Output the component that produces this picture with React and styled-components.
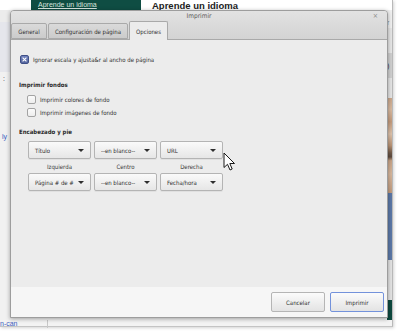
import React from "react";
import styled, { createGlobalStyle } from "styled-components";

const GlobalStyle = createGlobalStyle`
  html, body { margin: 0; padding: 0; background: #ffffff; }
  body { font-family: "Liberation Sans Narrow", "DejaVu Sans Condensed", "Roboto", sans-serif; color: #333; }
  * { box-sizing: border-box; }
`;

const FONT = `"Liberation Sans Narrow", "DejaVu Sans Condensed", "Roboto", sans-serif`;

const Screen = styled.div`
  position: relative;
  width: 400px;
  height: 331px;
  overflow: hidden;
  background: #ffffff;
`;

/* ---------- backdrop (browser page behind the dialog) ---------- */
const Browser = styled.div`
  width: 393px;
  height: 327px;
  display: flex;
  flex-direction: column;
  background: #f3f3f3;
  border-right: 1px solid #b9b9b9;
  border-bottom: 1px solid #c4c4c4;
  box-shadow: 1px 1px 3px rgba(0, 0, 0, 0.18);
`;

const TopBar = styled.div`
  height: 10px;
  display: flex;
  align-items: flex-start;
  background: #ffffff;
`;

const Banner = styled.div`
  width: 110px;
  height: 10px;
  margin-left: 31px;
  background: #0f4d43;
  color: #d6e4de;
  font-family: "Liberation Sans", sans-serif;
  font-size: 7px;
  line-height: 9px;
  padding: 0 0 0 7px;
  text-decoration: underline;
  overflow: hidden;
  white-space: nowrap;
`;

const Heading = styled.div`
  margin-left: 11px;
  color: #222;
  font-family: "Liberation Sans", sans-serif;
  font-size: 9.5px;
  line-height: 11px;
  height: 11px;
  font-weight: 700;
  white-space: nowrap;
`;

const Middle = styled.div`
  flex: 1;
  display: grid;
  grid-template-columns: 10px 1fr 5px;
`;

const Rail = styled.div`
  display: flex;
  flex-direction: column;
  overflow: hidden;
`;

const Block = styled.div`
  height: ${(p) => p.$h}px;
  flex: ${(p) => (p.$grow ? 1 : "none")};
  background: ${(p) => p.$bg || "transparent"};
  color: ${(p) => p.$color || "#333"};
  font-family: "Liberation Sans", sans-serif;
  font-size: 7px;
  line-height: ${(p) => p.$h}px;
  padding-left: ${(p) => p.$pl || 0}px;
  white-space: nowrap;
`;

const Wood = styled.div`
  height: 95px;
  background: linear-gradient(
    180deg,
    #c9a68a 0%, #d8b9a0 12%, #c29a7c 25%, #dcc1aa 38%, #b89274 50%,
    #6e5848 58%, #5d4a3e 62%, #c7a386 66%, #d6b69c 80%, #bf9a7d 100%
  );
`;

const Bottom = styled.div`
  height: 9px;
  display: flex;
  align-items: flex-end;
  color: #3a5cc0;
  font-family: "Liberation Sans", sans-serif;
  font-size: 7px;
  line-height: 8px;
`;

const BottomText = styled.span`
  width: 48px;
  border-right: 1px solid #c8c8c8;
  height: 8px;
`;

/* ---------- dialog ---------- */
const Dialog = styled.div`
  position: absolute;
  left: 10px;
  top: 10px;
  width: 378px;
  height: 308px;
  display: flex;
  flex-direction: column;
  border: 1px solid #9d9d9d;
  border-radius: 4px 4px 0 0;
  background: #ececec;
  box-shadow: 0 1px 4px rgba(0, 0, 0, 0.35);
  font-family: ${FONT};
  overflow: hidden;
`;

const Header = styled.div`
  height: 29px;
  display: flex;
  flex-direction: column;
  background: linear-gradient(180deg, #e2e2e2 0%, #d3d3d3 100%);
  border-bottom: 1px solid #a9a9a9;
`;

const TitleRow = styled.div`
  position: relative;
  height: 12px;
  display: flex;
  align-items: center;
  justify-content: center;
`;

const Title = styled.div`
  font-size: 6.5px;
  color: #5a5a5a;
`;

const Close = styled.div`
  position: absolute;
  right: 9px;
  top: 2px;
  font-size: 7px;
  line-height: 7px;
  color: #8a8a8a;
`;

const TabStrip = styled.div`
  flex: 1;
  display: flex;
  align-items: flex-end;
  gap: 1px;
`;

const Tab = styled.div`
  width: ${(p) => p.$w}px;
  height: ${(p) => (p.$active ? 19 : 16)}px;
  margin-bottom: ${(p) => (p.$active ? -1 : 0)}px;
  display: flex;
  align-items: center;
  justify-content: center;
  font-size: 6px;
  font-weight: 400;
  white-space: nowrap;
  color: #2f2f2f;
  border: 1px solid #a9a9a9;
  border-bottom: ${(p) => (p.$active ? "none" : "1px solid #a9a9a9")};
  border-radius: 2px 2px 0 0;
  background: ${(p) =>
    p.$active ? "#ececec" : "linear-gradient(180deg, #dadada 0%, #cbcbcb 100%)"};
  padding-top: ${(p) => (p.$active ? 1 : 0)}px;
`;

const Content = styled.div`
  flex: 1;
  display: flex;
  flex-direction: column;
  padding: 14px 8px 0 8px;
  background: #ececec;
`;

const CheckRow = styled.div`
  height: ${(p) => p.$h || 13}px;
  display: flex;
  align-items: center;
  gap: 4px;
  padding-left: ${(p) => p.$indent || 0}px;
  margin-top: ${(p) => p.$mt || 0}px;
  font-size: 6px;
  color: #2f2f2f;
  white-space: nowrap;
`;

const Box = styled.span`
  width: 9px;
  height: 9px;
  flex: none;
  display: inline-flex;
  border-radius: 2px;
  border: 1px solid ${(p) => (p.$checked ? "#3f4f86" : "#a3a3a3")};
  background: ${(p) =>
    p.$checked
      ? "linear-gradient(180deg, #7283bd 0%, #56679f 100%)"
      : "linear-gradient(180deg, #fbfbfb 0%, #ededed 100%)"};
  align-items: center;
  justify-content: center;
`;

const SectionTitle = styled.div`
  height: 10px;
  margin-top: ${(p) => p.$mt}px;
  display: flex;
  align-items: center;
  font-size: 6px;
  font-weight: 700;
  color: #2a2a2a;
  white-space: nowrap;
`;

const ComboGrid = styled.div`
  margin-top: 5px;
  margin-left: 9px;
  display: grid;
  grid-template-columns: repeat(3, 63px);
  grid-template-rows: 18px 14px 18px;
  column-gap: 3px;
`;

const Combo = styled.div`
  display: flex;
  align-items: center;
  justify-content: space-between;
  padding: 0 6px 0 6px;
  border: 1px solid #b4b4b4;
  border-radius: 2px;
  background: linear-gradient(180deg, #fafafa 0%, #e6e6e6 100%);
  box-shadow: 0 1px 0 rgba(0, 0, 0, 0.05);
  font-size: 6px;
  color: #2f2f2f;
  white-space: nowrap;
`;

const Arrow = styled.span`
  width: 0;
  height: 0;
  border-left: 3px solid transparent;
  border-right: 3px solid transparent;
  border-top: 3px solid #2e2e2e;
  flex: none;
`;

const ColLabel = styled.div`
  display: flex;
  align-items: center;
  justify-content: center;
  font-size: 6px;
  color: #3a3a3a;
`;

const Footer = styled.div`
  height: 30px;
  display: flex;
  align-items: center;
  justify-content: flex-end;
  gap: 5px;
  padding-right: 3px;
  background: #f6f6f6;
`;

const Button = styled.div`
  width: 54px;
  height: 20px;
  display: flex;
  align-items: center;
  justify-content: center;
  border: ${(p) => (p.$default ? "1.5px solid #7392db" : "1px solid #b5b5b5")};
  border-radius: 2px;
  background: linear-gradient(180deg, #fbfbfb 0%, #e3e3e3 100%);
  font-size: 6px;
  color: #2f2f2f;
`;

const Cursor = styled.svg`
  position: absolute;
  left: 223px;
  top: 152px;
`;

function CheckMark() {
  return (
    <svg width="5" height="5" viewBox="0 0 5 5">
      <path d="M0.6 0.6 L4.4 4.4 M4.4 0.6 L0.6 4.4" stroke="#fff" strokeWidth="1.1" />
    </svg>
  );
}

const combos = [
  ["Título", "--en blanco--", "URL"],
  ["Página # de #", "--en blanco--", "Fecha/hora"],
];

export default function App() {
  return (
    <Screen>
      <GlobalStyle />
      <Browser>
        <TopBar>
          <Banner>Aprende un idioma</Banner>
          <Heading>Aprende un idioma</Heading>
        </TopBar>
        <Middle>
          <Rail>
            <Block $h={12} $bg="#ececec" />
            <Block $h={50} $bg="#e5e6ec" />
            <Block $h={14} $bg="#f1f1f1" $pl={3}>:</Block>
            <Block $h={45} $bg="#f1f1f1" />
            <Block $h={12} $bg="#f1f1f1" $color="#3a5cc0" $pl={2}>ly</Block>
            <Block $grow $bg="#f1f1f1" />
          </Rail>
          <div />
          <Rail>
            <Block $h={8} $bg="#f0f0f0" />
            <Block $h={10} $bg="#f0f0f0" $color="#888">r</Block>
            <Block $h={25} $bg="#e6e6e6" />
            <Block $h={25} $bg="#cfcfcf">)</Block>
            <Block $h={20} $bg="#e4e4e4" />
            <Wood />
            <Block $h={67} $bg="#5b78a7" />
            <Block $h={40} $bg="#e3e3e3" />
            <Block $h={20} $bg="#0e4a3f" />
            <Block $grow $bg="#e8e8e8" />
          </Rail>
        </Middle>
        <Bottom>
          <BottomText>n-can</BottomText>
        </Bottom>
      </Browser>

      <Dialog>
        <Header>
          <TitleRow>
            <Title>Imprimir</Title>
            <Close>×</Close>
          </TitleRow>
          <TabStrip>
            <Tab $w={36}>General</Tab>
            <Tab $w={80}>Configuración de página</Tab>
            <Tab $w={39} $active>Opciones</Tab>
          </TabStrip>
        </Header>
        <Content>
          <CheckRow $h={10} $indent={1}>
            <Box $checked>
              <CheckMark />
            </Box>
            Ignorar escala y ajusta&r al ancho de página
          </CheckRow>
          <SectionTitle $mt={15}>Imprimir fondos</SectionTitle>
          <CheckRow $indent={8} $mt={4}>
            <Box />
            Imprimir colores de fondo
          </CheckRow>
          <CheckRow $indent={8}>
            <Box />
            Imprimir imágenes de fondo
          </CheckRow>
          <SectionTitle $mt={7}>Encabezado y pie</SectionTitle>
          <ComboGrid>
            {combos[0].map((t) => (
              <Combo key={"a" + t}>
                <span>{t}</span>
                <Arrow />
              </Combo>
            ))}
            <ColLabel>Izquierda</ColLabel>
            <ColLabel>Centro</ColLabel>
            <ColLabel>Derecha</ColLabel>
            {combos[1].map((t) => (
              <Combo key={"b" + t}>
                <span>{t}</span>
                <Arrow />
              </Combo>
            ))}
          </ComboGrid>
        </Content>
        <Footer>
          <Button>Cancelar</Button>
          <Button $default>Imprimir</Button>
        </Footer>
      </Dialog>

      <Cursor width="13" height="19" viewBox="0 0 13 19">
        <path
          d="M1 1 L1 15.5 L4.5 12.3 L7 18 L9.2 17 L6.8 11.5 L11.5 11.5 Z"
          fill="#ffffff"
          stroke="#1a1a1a"
          strokeWidth="1"
          strokeLinejoin="round"
        />
      </Cursor>
    </Screen>
  );
}
